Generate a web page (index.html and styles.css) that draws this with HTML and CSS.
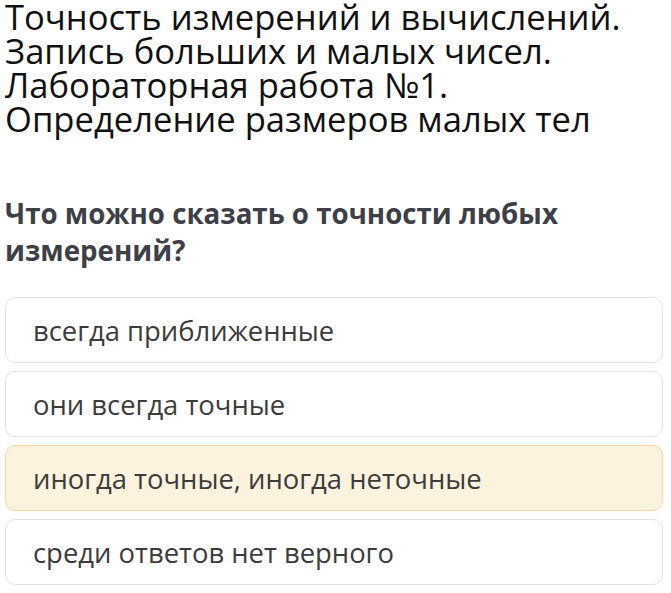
FILE: index.html
```html
<!DOCTYPE html>
<html lang="ru">
<head>
<meta charset="utf-8">
<link rel="stylesheet" href="styles.css">
</head>
<body>
<main class="page">
  <h1 class="title">Точность измерений и вычислений. Запись больших и малых чисел. Лабораторная работа №1. Определение размеров малых тел</h1>
  <h2 class="question">Что можно сказать о точности любых измерений?</h2>
  <ul class="options">
    <li class="option">всегда приближенные</li>
    <li class="option">они всегда точные</li>
    <li class="option option-selected">иногда точные, иногда неточные</li>
    <li class="option">среди ответов нет верного</li>
  </ul>
</main>
</body>
</html>
```
FILE: styles.css
```css
html, body {
  margin: 0;
  padding: 0;
  background: #ffffff;
}
.page {
  font-family: "Open Sans", "Noto Sans", sans-serif;
  padding: 0 8px 0 5px;
}
.title {
  margin: 0;
  font-size: 34.6px;
  line-height: 34px;
  font-weight: 400;
  color: #111111;
  width: 640px;
}
.question {
  margin: 59px 0 0;
  font-size: 27.7px;
  line-height: 37px;
  font-weight: 700;
  color: #3d4147;
  width: 600px;
}
.options {
  list-style: none;
  margin: 28px 0 0;
  padding: 0;
  display: flex;
  flex-direction: column;
  gap: 8px;
}
.option {
  box-sizing: border-box;
  height: 66px;
  display: flex;
  align-items: center;
  padding: 0 27px;
  border: 1px solid #e3e3e3;
  border-radius: 10px;
  font-size: 27.4px;
  color: #3c3c3c;
  background: #ffffff;
}
.option-selected {
  background: #fcf3df;
  border-color: #efd9a8;
}
```
